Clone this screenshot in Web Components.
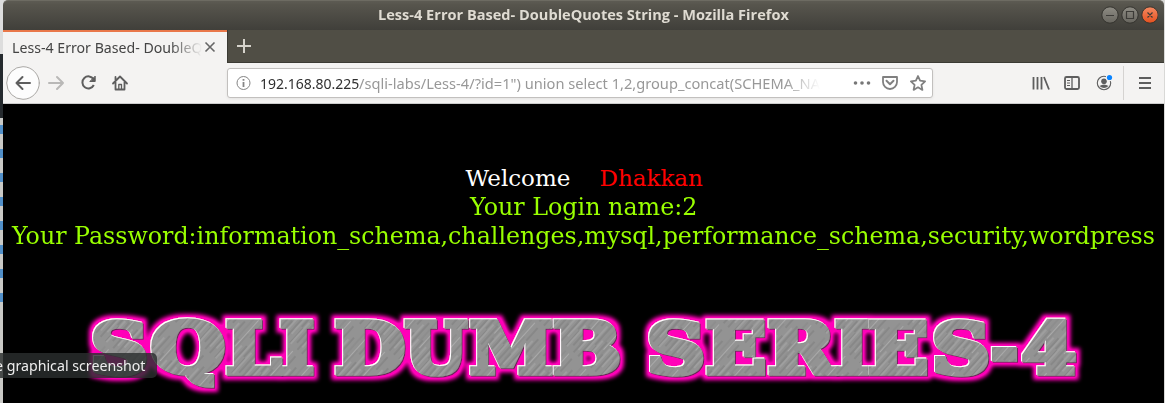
<!DOCTYPE html>
<html lang="en"><head><meta charset="utf-8"><title>Less-4 Error Based- DoubleQuotes String</title>
<style>html,body{margin:0;height:100%;overflow:hidden;background:#000}</style></head><body>
<desktop-view></desktop-view>
<script>
const define=(name,html,after)=>customElements.define(name,class extends HTMLElement{
  constructor(){super();this.attachShadow({mode:'open'}).innerHTML=html;}
  connectedCallback(){if(after)after(this);}
});
// Text scaled horizontally to a given width.
define('fit-text','<style>:host{display:block;white-space:pre;overflow:visible;flex:none}span{display:inline-block;transform-origin:0 50%}</style><span><slot></slot></span>',el=>{
  const s=el.shadowRoot.querySelector('span'),w=+el.getAttribute('w');
  el.style.width=w+'px';
  s.style.transform='scaleX('+(w/s.offsetWidth)+')';
});
define('title-bar',`<style>
:host{display:flex;height:30px;box-sizing:border-box;padding:0 6px 2px 375px;align-items:center;background:linear-gradient(#5d5b53,#57554d 12%,#403f3a);border-radius:5px 5px 0 0;border-top:1px solid #6d6b62;font:bold 14px "Open Sans","Noto Sans",sans-serif;color:#dfdbd2}
.c{margin-left:auto;display:flex;gap:3px}svg{display:block}
</style><fit-text w="411">Less-4 Error Based- DoubleQuotes String - Mozilla Firefox</fit-text>
<div class="c"><svg width="57" height="18" viewBox="0 0 57 18"><defs><linearGradient id="g" x2="0" y2="1"><stop stop-color="#8e8c84"/><stop offset="1" stop-color="#67655e"/></linearGradient><linearGradient id="o" x2="0" y2="1"><stop stop-color="#f58a62"/><stop offset="1" stop-color="#e5501e"/></linearGradient></defs>
<g stroke="#34332e" transform="translate(.5 .5)"><circle cx="8.500" cy="8.500" r="8.200" fill="url(#g)"/><circle cx="28.500" cy="8.500" r="8.200" fill="url(#g)"/><circle cx="48.500" cy="8.500" r="8.200" fill="url(#o)"/><path d="M4.500 9h8M25 5h7v7h-7zM46 6l5 5M51 6l-5 5" fill="none" stroke="#3c3b37" stroke-width="1.200"/></g></svg></div>`);
define('tab-strip',`<style>
:host{display:flex;height:33px;background:#504e45}
.tab{display:flex;box-sizing:border-box;width:224px;padding:0 0 1px 9px;align-items:center;background:#f4f3f2;border-top:2px solid #e9784a;color:#444;font:14px "Noto Sans","Open Sans",sans-serif}
.t{width:190px;overflow:hidden;-webkit-mask:linear-gradient(90deg,#000 158px,transparent 190px);flex:none}
.new{box-sizing:border-box;width:34px;border-left:1px solid #3b3a34;display:flex}
.rest{flex:1;box-sizing:border-box;border-bottom:1px solid #3b3a34}.new{border-bottom:1px solid #3b3a34}
svg{display:block;flex:none}
</style><div class="tab"><div class="t"><fit-text w="190">Less-4 Error Based- DoubleQ</fit-text></div><svg width="18" height="18"><path d="M3.500 4.500l9 9M12.500 4.500l-9 9" stroke="#666" stroke-width="1.600"/></svg></div>
<div class="new"><svg width="33" height="32"><path d="M9 16h14M16 9v14" stroke="#d6d3cb" stroke-width="2"/></svg></div><div class="rest"></div>`);
define('nav-bar',`<style>
:host{display:flex;height:41px;box-sizing:border-box;background:#f4f3f2;border-bottom:1px solid #ccc;align-items:center;font:14px "Noto Sans","Open Sans",sans-serif}
svg{display:block;flex:none}
.url{display:flex;box-sizing:border-box;width:706px;height:30px;margin-left:84px;border:1px solid #c2c0be;border-radius:3px;background:#fff;align-items:center;box-shadow:0 1px 3px #0001;color:#989898}
.a{display:flex;width:562px;margin-left:7px;overflow:hidden;-webkit-mask:linear-gradient(90deg,#000 524px,transparent 560px);flex:none}.h{color:#303030}
</style><svg width="140" height="40" viewBox="0 0 140 40" fill="none" stroke="#5e5e5e" stroke-width="2" stroke-linecap="round" stroke-linejoin="round">
<circle cx="20" cy="20" r="16.300" fill="#fdfdfd" stroke="#aaa8a5" stroke-width="1"/><path d="M27 20H13.500M19.500 14l-6 6 6 6"/><path stroke="#b9b8b7" d="M46 20h14M54 14l6 6-6 6"/>
<path d="M90.500 16.200A6 6 0 1 0 90.800 22" stroke-linecap="butt"/><path d="M92.200 13.500v5h-5z" fill="#5e5e5e" stroke-width="1"/><path d="M110 20.500L117 13.500 124 20.500M112.500 19v7.500h9V19M112.500 14v3" stroke-width="1.800"/><path d="M115.800 26v-4.500h2.700v4.500" stroke-width="1.300"/></svg>
<div class="url"><svg width="25" height="26" fill="none" stroke="#858585"><circle cx="15.500" cy="13" r="6.500"/><path d="M15.500 12v5M15.500 9v1.700" stroke-width="1.800"/></svg>
<div class="a"><fit-text class="h" w="99">192.168.80.225</fit-text><fit-text w="461">/sqli-labs/Less-4/?id=1") union select 1,2,group_concat(SCHEMA_NA</fit-text></div>
<svg width="108" height="28" viewBox="4 0 108 28" fill="none" stroke="#808080" stroke-width="2" stroke-linejoin="round"><g fill="#777" stroke="none"><circle cx="37.500" cy="14" r="1.800"/><circle cx="44" cy="14" r="1.800"/><circle cx="50.500" cy="14" r="1.800"/></g><path d="M65 8h14v5a7 7 0 0 1-14 0z" stroke-width="1.800"/><path d="M68.500 11.800l3.500 3.400 3.500-3.400" stroke-linecap="round"/><path d="M100 7l2.100 4.700 5 .6-3.700 3.500 1 5.100-4.400-2.600-4.400 2.600 1-5.100-3.700-3.500 5-.6z" stroke-width="1.800"/></svg></div>
<svg style="margin-left:94px" width="136" height="40" viewBox="0 0 136 40" fill="none" stroke="#5e5e5e" stroke-width="2">
<path d="M6.500 14v12.500M10.500 14v12.500M14.500 14v12.500M17 14l5 12.500" stroke-width="1.800"/><rect x="38" y="14" width="14" height="12" rx="1.500" stroke-width="1.800"/><path d="M45 14v12" stroke-width="1.300"/><path d="M40 17.500h3M40 20h3M40 22.500h3" stroke-width="1"/>
<circle cx="77" cy="20" r="6.700" stroke-width="1.100"/><circle cx="77" cy="18.300" r="2.800" fill="#5e5e5e" stroke="none"/><path d="M72.500 23q4.500-3 9 0-4.500 4-9 0" fill="#5e5e5e" stroke="none"/><circle cx="82.500" cy="14.500" r="3.700" fill="#f4f3f2" stroke="none"/><circle cx="82.500" cy="14.500" r="2.600" fill="#0a84ff" stroke="none"/>
<path d="M96.500 3v34" stroke="#d5d3d1" stroke-width="1"/><path d="M112 15h12M112 20h12M112 25h12"/></svg>`);
define('series-banner',`<style>:host{display:block;height:106px}svg{display:block}text{font:bold 69.500px "DejaVu Serif",serif;white-space:pre}</style>
<svg width="1161" height="106" viewBox="3 297 1161 106"><defs>
<pattern id="m" width="61" height="23" patternUnits="userSpaceOnUse" patternTransform="rotate(-48)"><rect width="61" height="23" fill="#939393"/><g stroke-width=".8"><path d="M0 1h30M20 6h27M5 13h25M0 18h18M38 21h17" stroke="#767676"/><path d="M8 3h34M0 9h28M22 15.500h35M5 20h22" stroke="#b0b0b0"/><path d="M28 11h29M0 7.500h20M10 17h30" stroke="#848484"/></g></pattern>
<filter id="glow" x="-5%" y="-30%" width="110%" height="160%"><feMorphology in="SourceAlpha" operator="dilate" radius="4" result="d"/><feGaussianBlur in="d" stdDeviation="1.900" result="b"/><feComponentTransfer in="b" result="bb"><feFuncA type="linear" slope="1.200"/></feComponentTransfer><feFlood flood-color="#ff00b8"/><feComposite in2="bb" operator="in" result="p"/>
<feOffset in="SourceAlpha" dx="-1" dy="-1" result="l"/><feFlood flood-color="#fff"/><feComposite in2="l" operator="in" result="w"/><feOffset in="SourceAlpha" dx=".7" dy=".7" result="r"/><feFlood flood-color="#70205b"/><feComposite in2="r" operator="in" result="s"/><feMerge><feMergeNode in="p"/><feMergeNode in="s"/><feMergeNode in="w"/><feMergeNode in="SourceGraphic"/></feMerge></filter></defs>
<text y="372.500" fill="url(#m)" stroke="url(#m)" stroke-width="5.500" filter="url(#glow)"></text></svg>`,el=>{
  // Each entry: character, left edge, advance width.
  const glyphs=[['S',91,57],['Q',151,74],['L',226,55],['I',280,34],[' ',314,18],['D',335,70],['U',405,62],['M',470,83],['B',553,68],[' ',622,20],['S',647,58],['E',706,60],['R',768,67],['I',835,34],['E',868,60],['S',932,58],['-',991,27],['4',1022,54]];
  const t=el.shadowRoot.querySelector('text');
  for(const [c,x,w] of glyphs){const s=document.createElementNS('http://www.w3.org/2000/svg','tspan');s.textContent=c;s.setAttribute('x',x);s.setAttribute('textLength',w);s.setAttribute('lengthAdjust','spacingAndGlyphs');t.append(s);}
});
define('page-content',`<style>:host{display:flex;flex-direction:column;flex:1;background:#000;color:#9f0;font:24px/29px "DejaVu Serif",serif}
.m{padding-top:60px;height:133px;display:flex;flex-direction:column;align-items:center}.r{display:flex;gap:29px;color:#fff;font-size:23px;padding-left:1px}.d{color:#f00}</style>
<div class="m"><div class="r"><fit-text w="105">Welcome</fit-text><fit-text class="d" w="103">Dhakkan</fit-text></div><fit-text w="227">Your Login name:2</fit-text><fit-text w="1143">Your Password:information_schema,challenges,mysql,performance_schema,security,wordpress</fit-text></div><series-banner></series-banner>`);
define('screenshot-tip',`<style>:host{position:absolute;left:0;top:353px;width:157px;height:25px;overflow:hidden;background:#2b2f2fd0;border-radius:0 5px 5px 0;color:#eee;font:14px/25px "Noto Sans","Open Sans",sans-serif}fit-text{margin-left:-5px}</style><fit-text w="150">e graphical screenshot</fit-text>`);
define('desktop-view',`<style>:host{display:flex;position:relative;width:1165px;height:403px;overflow:hidden;background:#d9d9d7}
.edge{width:3px;flex:none;background:linear-gradient(#ddd 0 54px,#252a2e 54px 118px,transparent 118px),linear-gradient(transparent 310px,#c8c8c5 310px),repeating-linear-gradient(#c9c9c6 0 5px,#518fc8 5px 14px,#c9c9c6 14px 24px)}
.w{width:1161px;display:flex;flex-direction:column}</style><div class="edge"></div><div class="w"><title-bar></title-bar><tab-strip></tab-strip><nav-bar></nav-bar><page-content></page-content></div><screenshot-tip></screenshot-tip>`);
</script></body></html>
